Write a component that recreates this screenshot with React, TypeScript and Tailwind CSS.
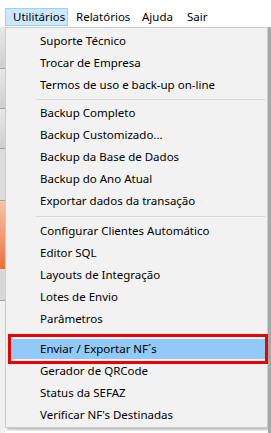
import React from 'react';

const groups: string[][] = [
  ['Suporte Técnico', 'Trocar de Empresa', 'Termos de uso e back-up on-line'],
  ['Backup Completo', 'Backup Customizado...', 'Backup da Base de Dados', 'Backup do Ano Atual', 'Exportar dados da transação'],
  ['Configurar Clientes Automático', 'Editor SQL', 'Layouts de Integração', 'Lotes de Envio', 'Parâmetros'],
  ['Enviar / Exportar NF´s', 'Gerador de QRCode', 'Status da SEFAZ', "Verificar NF's Destinadas"],
];

const selected = 'Enviar / Exportar NF´s';

const MenuItem = ({ label }: { label: string }) => {
  if (label === selected) {
    return (
      <div className="border-[3px] border-[#ee0000] ml-[2px] -mr-[1px] my-[-4px] py-[2px] relative z-10">
        <div className="h-[20px] flex items-center pl-[29px] bg-[#91c9f7]">
          <span>{label}</span>
        </div>
      </div>
    );
  }
  return (
    <div className="h-[22px] flex items-center pl-[34px]">
      <span>{label}</span>
    </div>
  );
};

const App = () => {
  return (
    <div
      className="w-[271px] h-[433px] bg-white overflow-hidden text-[11.5px] text-black leading-none"
      style={{ fontFamily: '"Noto Sans", "Open Sans", sans-serif' }}
    >
      {/* barra de menu */}
      <div className="h-[27px] flex items-end pl-[5px] pb-[1px]">
        <div className="w-[63px] h-[18px] flex items-center pl-[7px] bg-[#cce8ff] border border-[#99d1ff]">Utilitários</div>
        <div className="w-[66px] h-[18px] flex items-center pl-[8px]">Relatórios</div>
        <div className="w-[45px] h-[18px] flex items-center pl-[8px]">Ajuda</div>
        <div className="h-[18px] flex items-center pl-[8px]">Sair</div>
      </div>

      <div className="flex h-[406px]">
        {/* janela atrás, lado esquerdo */}
        <div className="w-[5px] flex flex-col overflow-hidden">
          <div className="h-[42px] bg-gradient-to-b from-[#e8e8e8] to-[#cfcfcf] border-b border-[#a0a0a0]" />
          <div className="h-[40px] bg-gradient-to-b from-[#e8e8e8] to-[#cfcfcf] border-b border-[#a0a0a0]" />
          <div className="h-[40px] bg-gradient-to-b from-[#e8e8e8] to-[#cfcfcf] border-b border-[#a0a0a0]" />
          <div className="h-[52px] bg-[#dcdcdc] border-b border-[#a0a0a0]" />
          <div className="h-[68px] bg-gradient-to-b from-[#f5c3a8] to-[#e8703a]" />
          <div className="h-[32px] bg-[#d8d8d8] border-b border-[#a0a0a0]" />
          <div className="flex-1 bg-[#f0f0f0]" />
        </div>

        {/* menu suspenso */}
        <div className="w-[263px] h-[401px] bg-[#f2f2f2] border border-[#cccccc] py-[2px] shadow-[2px_2px_2px_rgba(0,0,0,0.25)]">
          {groups.map((items, gi) => (
            <div key={gi}>
              {gi > 0 && (
                <div className={gi === 1 ? 'h-[6px] flex items-center pl-[30px] pr-[2px]' : 'h-[8px] flex items-center pl-[30px] pr-[2px]'}>
                  <div className="h-px w-full bg-[#d7d7d7]" />
                </div>
              )}
              {items.map((label) => (
                <MenuItem key={label} label={label} />
              ))}
            </div>
          ))}
        </div>

        {/* janela atrás, lado direito */}
        <div className="flex-1 bg-[#a8a8a8]" />
      </div>
    </div>
  );
};

export default App;
